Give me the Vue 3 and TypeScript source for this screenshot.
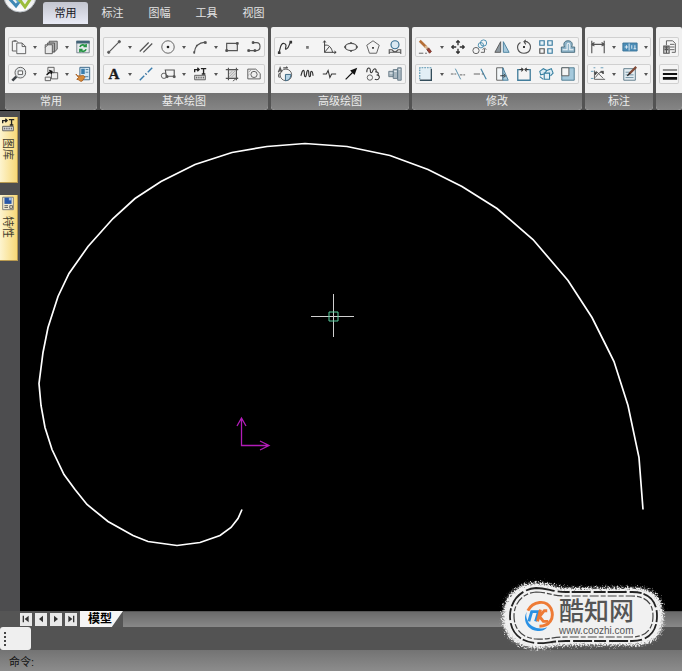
<script setup lang="ts">
import { ref } from 'vue'

interface Tool {
  icon: string
  label: string
  menu?: boolean
}
interface Panel {
  title: string
  compact?: boolean
  rows: Tool[][]
}

const tabs = ['常用', '标注', '图幅', '工具', '视图']
const activeTab = ref('常用')
const command = ref('')

const t = (icon: string, label: string, menu = false): Tool => ({ icon, label, menu })

const panels: Panel[] = [
  {
    title: '常用',
    rows: [
      [t('copy', '复制', true), t('paste', '粘贴', true), t('refresh', '刷新')],
      [t('zoom', '缩放', true), t('block', '块', true), t('brush', '特性匹配')],
    ],
  },
  {
    title: '基本绘图',
    rows: [
      [t('line', '直线', true), t('parallel', '平行线'), t('circle', '圆', true), t('arc', '圆弧', true), t('rect', '矩形'), t('polyline', '多段线')],
      [t('text', '文字', true), t('axis', '中心线'), t('callout', '块引用', true), t('library', '图库', true), t('hatch', '剖面线'), t('fill', '填充')],
    ],
  },
  {
    title: '高级绘图',
    rows: [
      [t('spline', '样条'), t('point', '点'), t('formula', '公式曲线'), t('ellipse', '椭圆'), t('polygon', '正多边形'), t('enlarge', '局部放大')],
      [t('detail', '圆弧拟合'), t('wave', '波浪线'), t('break', '双折线'), t('arrow', '箭头'), t('gear', '齿轮'), t('shaft', '孔轴')],
    ],
  },
  {
    title: '修改',
    rows: [
      [t('erase', '删除', true), t('move', '平移'), t('duplicate', '平移复制'), t('mirror', '镜像'), t('rotate', '旋转'), t('array', '阵列'), t('offset', '等距线')],
      [t('corner', '过渡', true), t('trim', '裁剪'), t('extend', '延伸'), t('stretch', '拉伸'), t('split', '打断'), t('explode', '分解'), t('scale', '缩放图形')],
    ],
  },
  {
    title: '标注',
    compact: true,
    rows: [
      [t('dimension', '尺寸标注', true), t('tolerance', '公差', true)],
      [t('coordinate', '坐标标注', true), t('note', '标注编辑', true)],
    ],
  },
  {
    title: '',
    rows: [[t('layer', '图层')], [t('weight', '线宽')]],
  },
]

const icons: Record<string, string> = {
  copy: '<path d="M6 2.500H1.500v11H6M3 2l3 0 2 2" /><path fill="#f4f5f6" d="M6.500 4.500h6l4 4v8h-10zM12.500 4.500v4h4"/>',
  paste: '<path fill="#bbb" d="M7 2.500h9v9l-3 3H7z"/><path fill="#aaa" d="M5 4.500h8v10H5z"/><path fill="#e8e8e8" d="M2.500 6.500h8v10h-8zM2.500 9.500l3-3"/>',
  refresh: '<path fill="#e6eaed" stroke="#73808b" d="M2 2.500h14v13H2z"/><path fill="#426477" stroke="none" d="M1.500 2h15v3h-15z"/><path stroke="#279445" stroke-width="1.800" d="M5.500 9c1-3 5-3 6-1M12.500 5.500v3H9.500M12.500 11.500c-1 3-5 3-6 1M5.500 15v-3h3"/>',
  zoom: '<circle cx="10.500" cy="7.500" r="6" fill="#e5e8ea"/><path fill="#fff" d="M8 5.500h5v4H8z"/><path stroke="#3d4348" stroke-width="3" d="M6 12l-4.500 4.500"/>',
  block: '<path fill="#eee" d="M5.500 1.500h7v6h-7zM9.500 7.500h7v7h-7zM2.500 12.500h6v4h-6z"/><path stroke="#111" stroke-width="1.500" d="M4 10l5-4M7 5l3 1-1 3"/>',
  brush: '<path fill="#d2e6f3" stroke="#315f82" d="M5.500 1.500h11v14h-11z"/><path fill="#397dac" stroke="none" d="M7 3h4v6H7z"/><path stroke="#477897" d="M12 4h3M12 7h3M9 12h6"/><path fill="#d78a37" stroke="#a45b1e" d="M1 9c2 3 4 2 6 2 2-1 4 0 4 2l-3 4c-3 1-3-2-6-2l2-2z"/>',
  line: '<path stroke-width="1.300" d="M3 15L15 3"/><circle cx="3" cy="15" r="1.300" fill="#555"/><circle cx="15" cy="3" r="1.300" fill="#555"/>',
  parallel: '<path stroke-width="1.400" d="M2 14L12 4M6 15L16 5"/>',
  circle: '<circle cx="9" cy="9" r="7"/><circle cx="9" cy="9" r="1.500" fill="#222" stroke="none"/>',
  arc: '<path stroke-width="1.300" d="M2.500 16C3 9 7 4 15 3.500"/><path fill="#555" d="M2 14h1v2H2zM14 3h2v2h-2zM5 7h1v1H5z"/>',
  rect: '<path stroke-width="1.300" fill="#ececec" d="M3 5h12v8H3z"/><path fill="#444" d="M2 12h2v2H2zM14 4h2v2h-2z"/>',
  polyline: '<path stroke-width="1.300" d="M8 4h4c5 0 5 9 0 9H3"/><path fill="#444" d="M7 3h2v2H7zM2 12h2v2H2zM9 12h2v2H9z"/>',
  text: '<text x="9" y="15" text-anchor="middle" font-family="Liberation Serif, serif" font-size="17" font-weight="700" fill="#1b1b1b" stroke="#1b1b1b" stroke-width=".4">A</text>',
  axis: '<path stroke="#397cad" stroke-width="1.600" d="M2 16l5-5M11 7l5-5"/><path stroke="#16578b" stroke-width="2" d="M8.500 9.500l1-1"/>',
  callout: '<path stroke-width="1.300" d="M6 4.500h10v7H7z"/><circle cx="4.500" cy="11" r="3"/><path fill="#555" d="M7 11h2v2H7zM15 11h2v2h-2z"/>',
  library: '<path stroke="#222" stroke-width="1.500" d="M3 7V4h4M6 2l2 2-2 2M10 3h6M13 3v6M11 9h4"/><path fill="#dedede" d="M3 10.500h12v5H3z"/><path d="M5 12v2M7 12v2M9 12v2M11 12v2M13 12v2"/>',
  hatch: '<path fill="#ddd" stroke="none" d="M5 4h9v10H5z"/><path stroke-width="1.300" d="M5 2v14M14 2v14M2 4h14M2 14h14"/><path stroke="#aaa" d="M6 9l4-4M6 12l7-7M8 13l5-5"/><path d="M10 17l5-4"/>',
  fill: '<path fill="#efefef" d="M2 3.500h9l5 5v6H2z"/><circle cx="9" cy="9.500" r="3.500"/><path stroke="#999" d="M3 7l3-3M2 11l2-2"/>',
  spline: '<path stroke="#333" stroke-width="1.300" d="M2 15C4 13 3 4 8 5c5 1-1 8 3 6 3-1 2-6 5-8"/><path fill="#333" stroke="none" d="M1 14h3v3H1zM14 2h3v3h-3z"/>',
  point: '<path fill="#777" stroke="none" d="M8 8h3v3H8z"/>',
  formula: '<path stroke="#333" d="M4 2v13h13M2.500 4L4 2l1.500 2M15 13.500l2 1.500-2 1.500M4 7c5-1 8 3 9 8M4 15l5-6"/>',
  ellipse: '<ellipse cx="9" cy="9" rx="6.500" ry="4" stroke-width="1.300"/><path fill="#333" d="M2 8h1v2H2zM15 8h1v2h-1zM8.500 4h1v1h-1zM8.500 13h1v1h-1z"/>',
  polygon: '<path d="M9 2l7 5-3 9H5L2 7z"/><path fill="#333" stroke="none" d="M8 9h2v2H8z"/>',
  enlarge: '<circle cx="9" cy="6.500" r="4.500" stroke="#376f91" fill="#d9e9f2" stroke-width="1.300"/><path stroke-width="1.200" d="M2.500 17v-5h3c2 3 5 3 7 0h3v5M2.500 15h13"/>',
  detail: '<circle cx="10" cy="10" r="6.500"/><path fill="#b5d3e5" stroke="#315e7b" d="M9.500 9.500h6c0 4-2 7-6 7z"/><path stroke-width="1.400" d="M1.500 7l2-5 2 5M2 5.500h3M7 2h5l-2-1M3 13c-2-1-1-4 0-5"/>',
  wave: '<path stroke="#333" stroke-width="1.300" d="M2 11c1-1 1-6 3-6s0 7 2 7 1-7 3-7 0 7 2 7 0-6 2-6 1 3 2 5"/>',
  break: '<path stroke="#333" stroke-width="1.200" d="M2 9h4l2-4 2 8 2-4h5"/>',
  arrow: '<path stroke="#111" stroke-width="1.300" d="M3 15l8-8"/><path fill="#111" stroke="none" d="M16 2l-3 8-5-5z"/>',
  gear: '<path stroke="#333" stroke-width="1.200" d="M2 7c0-6 4-6 4-2s2 3 3 0 5-2 3 2M12 7c3-1 4 2 2 3 4 1 2 7-3 5"/><circle cx="5.500" cy="13" r="3"/>',
  shaft: '<path fill="#a9b7c0" stroke="#657985" d="M2 6h5V4h5V2h4v14h-4v-2H7v-2H2z"/><path stroke="#f0f5f8" d="M3 8h4M8 6h3M13 4h2"/><path stroke="#486576" d="M7 6v6M12 4v10"/>',
  erase: '<path stroke="#b56f37" stroke-width="3" d="M2 2l7 7"/><path stroke="#d9b58d" stroke-width="3" d="M8 8l3 3"/><path fill="#9d3e30" stroke="#6f3028" d="M10 12l2-2 3 4-2 2z"/><path d="M1 16h9" stroke-dasharray="5 2"/>',
  move: '<path stroke="#333" stroke-width="1.500" d="M9 2v5M9 11v5M2 9h5M11 9h5M7 4l2-2 2 2M7 14l2 2 2-2M4 7L2 9l2 2M14 7l2 2-2 2"/>',
  duplicate: '<circle cx="13" cy="4.500" r="3.500" stroke="#3d86aa"/><circle cx="10" cy="7" r="3" stroke="#3d86aa"/><circle cx="4.500" cy="13" r="3.500"/><path d="M10 15h4v-4M12 12l2-2 2 2"/>',
  mirror: '<path fill="#8d989f" d="M7.500 3v12H1z"/><path fill="#a6c9dc" stroke="#437c9b" d="M10.500 3v12H17z"/>',
  rotate: '<path stroke-width="1.300" d="M5 4C-1 8 2 16 9 16c8 0 10-10 3-13M9 3h4M11 1L9 3l2 3"/><path fill="#222" stroke="none" d="M8 8h2v2H8z"/>',
  array: '<path stroke="#397a9e" stroke-width="1.300" fill="#e7f2f7" d="M2 2h5v5H2zM11 2h5v5h-5zM11 11h5v5h-5z"/><path stroke-width="1.300" d="M2 11h5v5H2z"/>',
  offset: '<path fill="#8fb4c9" stroke="#416778" d="M1.500 15V9H5C3 4 6 2 9 2c4 0 6 3 4 7h3.500v6z"/><path stroke="#f2f6f8" stroke-width="1.200" d="M3 12h5V7c0-3 3-3 3 0v5h4"/>',
  corner: '<path fill="#e2eff5" stroke="none" d="M3 3h11v12H3z"/><path stroke="#4f91b0" stroke-width="1.300" stroke-dasharray="2 1" d="M2 15V2h13"/><path stroke="#334d5b" stroke-width="1.500" d="M2 16h13V3"/>',
  trim: '<path stroke="#4684a4" d="M6 3l6 12"/><path stroke-dasharray="3 1" d="M1 9h6M11 10h6"/>',
  extend: '<path stroke="#4684a4" stroke-width="1.300" d="M10 3l6 12"/><path d="M2 9h7M11 9h2"/>',
  stretch: '<path fill="#f3f7f9" d="M3 2h7v14H3z"/><path fill="#a9ccdd" stroke="#407998" d="M10 2l6 14h-6z"/><path stroke="#222" d="M7 11h5M11 9l2 2-2 2"/>',
  split: '<path stroke="#427d9b" stroke-width="1.500" d="M6 4H2v12h14V4h-4"/><path stroke="#333" stroke-width="1.200" d="M4 4h3M11 4h3M6 2l2 2-2 2M12 2l-2 2 2 2"/>',
  explode: '<path stroke="#347e9f" stroke-width="1.200" fill="#dcecf4" d="M2 6l4-3 4 2-3 4-4 1zM2 12l4 3M10 5l5-2 2 5-3 3"/><path stroke="#347e9f" stroke-width="1.200" fill="#e4f0f6" d="M7 8h6v7H7z"/>',
  scale: '<path fill="#a5c9dc" stroke="#47758d" d="M2 16V2h14v14z"/><path fill="#f4f5f5" d="M2 2h8v9H2z"/>',
  dimension: '<path stroke-width="1.300" d="M2 2v14M16 2v14M3 6h12M5 4L2 6l3 2M13 4l3 2-3 2"/>',
  tolerance: '<path fill="#4c8db7" stroke="#397397" d="M1 4.500h16v9H1z"/><path stroke="#e8f2f8" d="M8 5v8M5 7v4M3 9h4M11 7v4M14.500 7v4M13 11h3"/>',
  coordinate: '<path d="M5 5v10h12M6 13l4-5 5-2M7 6l8 8" /><path stroke="#5995b3" d="M4 2h2M12 2h3M1 6h3M1 14h3"/><path fill="#333" d="M5 7l3 0-2 3zM12 6h3v3z"/>',
  note: '<path fill="#e3edf2" stroke="#567383" d="M2 3h13v13H2z"/><path stroke="#67889c" d="M4 7h6M4 10h9M4 13h9"/><path stroke="#804936" stroke-width="2.500" d="M16 1L8 9"/><path stroke="#222" stroke-width="1.500" d="M9 8l-3 3"/>',
  layer: '<path d="M5 7V2h7l3 3v10h-4M9 6h5M9 9h5M9 12h5"/><path fill="#ddd" stroke-width="1.300" d="M2 8h6v8H2zM3 10h4M3 12h4M5 8v8"/>',
  weight: '<path stroke="#111" d="M1 4.500h16"/><path stroke="#111" stroke-width="2" d="M1 9h16"/><path stroke="#111" stroke-width="3" d="M1 14h16"/>',
  property: '<path fill="#f0ead0" stroke="#777" d="M3 2.500h12v14H3z"/><path fill="#2858a8" stroke="none" d="M5 3h8v7H5z"/><path fill="#9db9df" stroke="none" d="M10 3h3v3h-3z"/><path d="M5 12h4M5 14h4M11 12h3v3h-3z"/>',
  first: '<path fill="#333" stroke="none" d="M4 4h2v10H4zM13 4v10L7 9z"/>',
  prev: '<path fill="#333" stroke="none" d="M12 4v10L6 9z"/>',
  next: '<path fill="#333" stroke="none" d="M6 4v10l6-5z"/>',
  last: '<path fill="#333" stroke="none" d="M12 4h2v10h-2zM5 4v10l6-5z"/>',
}

const dockTabs = [
  { icon: 'library', label: '图库' },
  { icon: 'property', label: '特性' },
]
const pagers = [
  { icon: 'first', label: '首页' },
  { icon: 'prev', label: '上一页' },
  { icon: 'next', label: '下一页' },
  { icon: 'last', label: '末页' },
]

const curve: [number, number][] = [
  [242, 509], [238, 518], [231, 527], [220, 535], [200, 542], [177, 545], [148, 541], [133, 535], [108, 521],
  [87, 504], [75, 489], [64, 474], [52, 449], [45, 427], [41, 405], [39, 383], [43, 352], [48, 327], [58, 296],
  [69, 273], [88, 246], [113, 218], [135, 198], [161, 181], [195, 164], [232, 152], [267, 146], [305, 143],
  [347, 146], [390, 155], [428, 169], [462, 186], [497, 208], [533, 239], [568, 280], [592, 317], [607, 347],
  [614, 361], [628, 405], [639, 457], [643, 509],
]
const curvePoints = curve.map(([x, y]) => `${x - 20},${y - 110.5}`).join(' ')
</script>

<template>
  <div class="app">
    <header class="ribbon">
      <div class="tabbar">
        <button class="logo" aria-label="主菜单">
          <svg viewBox="0 0 34 34">
            <defs>
              <linearGradient id="orb" x1="0" y1="0" x2="0" y2="1">
                <stop offset="0" stop-color="#c9cdd2" />
                <stop offset="1" stop-color="#ffffff" />
              </linearGradient>
            </defs>
            <circle cx="17" cy="17" r="16" fill="url(#orb)" stroke="#b9bfc5" />
            <path d="M5 18l8 9 6-8" fill="none" stroke="#3d87b4" stroke-width="3" />
            <path d="M11 17l5 6" fill="none" stroke="#61a8c7" stroke-width="3" />
            <path d="M16 20l6 8 8-12" fill="none" stroke="#9bbd3c" stroke-width="3" />
          </svg>
        </button>
        <nav class="tabs">
          <button
            v-for="tab in tabs"
            :key="tab"
            class="tab"
            :class="{ active: tab === activeTab }"
            @click="activeTab = tab"
          >{{ tab }}</button>
        </nav>
      </div>
      <div class="panels">
        <section v-for="(panel, p) in panels" :key="p" class="panel" :class="{ compact: panel.compact }">
          <div class="rows">
            <div v-for="(row, r) in panel.rows" :key="r" class="row">
              <template v-for="tool in row" :key="tool.icon">
                <button class="tool" :aria-label="tool.label">
                  <svg class="icon" viewBox="0 0 18 18" v-html="icons[tool.icon]"></svg>
                </button>
                <button v-if="tool.menu" class="drop" :aria-label="tool.label + '选项'"><i></i></button>
              </template>
            </div>
          </div>
          <h2 class="title">{{ panel.title }}</h2>
        </section>
      </div>
    </header>

    <main class="work">
      <aside class="dock">
        <button v-for="d in dockTabs" :key="d.icon" class="docktab">
          <svg class="icon dockicon" viewBox="0 0 18 18" v-html="icons[d.icon]"></svg>
          <span>{{ d.label }}</span>
        </button>
      </aside>
      <svg class="canvas" viewBox="0 0 662 500">
        <polyline :points="curvePoints" fill="none" stroke="#fff" stroke-width="1.700" />
        <path d="M291 205.500h43M313.500 183v43" stroke="#d0d0d0" />
        <path d="M309 201h9v9h-9z" fill="none" stroke="#5ad0a0" />
        <path d="M221.500 307v27.500H249M217 315l4.500-8 4.500 8M240 330l9 4.500-9 4.500" fill="none" stroke="#b21cb8" stroke-width="1.300" />
      </svg>
    </main>

    <div class="sheets">
      <button v-for="g in pagers" :key="g.icon" class="pager" :aria-label="g.label">
        <svg class="icon" viewBox="0 0 18 18" v-html="icons[g.icon]"></svg>
      </button>
      <button class="sheet">模型</button>
      <div class="scroll"></div>
    </div>
    <div class="strip"><div class="grip"><i></i><i></i><i></i><i></i></div></div>
    <footer class="command">
      <label for="cmd">命令:</label>
      <input id="cmd" v-model="command" type="text" autocomplete="off" />
    </footer>

    <div class="brand">
      <svg class="cloud" viewBox="0 0 180 86">
        <defs>
          <filter id="soft" x="-10%" y="-20%" width="120%" height="140%">
            <feGaussianBlur stdDeviation="2" />
          </filter>
          <filter id="grain" x="-10%" y="-20%" width="120%" height="140%">
            <feGaussianBlur stdDeviation="1" result="b" />
            <feTurbulence type="fractalNoise" baseFrequency="0.6" numOctaves="2" seed="4" result="n" />
            <feDisplacementMap in="b" in2="n" scale="11" xChannelSelector="R" yChannelSelector="G" />
          </filter>
        </defs>
        <g fill="#f1f1f1">
          <path filter="url(#grain)" d="M40 10C58 9 56 15 76 15h64c20 0 29 10 29 28s-8 29-28 29H74c-18 0-20 4-36 3C18 72 9 61 9 43s12-32 31-33z" />
          <path filter="url(#soft)" d="M40 12C56 11 56 17 76 17h64c18 0 27 9 27 26s-8 27-26 27H74c-18 0-20 4-36 3C20 70 11 60 11 43s12-30 29-31z" />
        </g>
        <g fill="none" stroke="#222">
          <path stroke-width="1.800" stroke-dasharray="19 3 12 2" d="M42 15C54 15 58 19 72 19h66c17 0 25 9 25 24s-8 25-25 25H72C57 68 52 71 41 70 24 68 16 58 16 43s11-27 26-28z" />
          <path stroke="#444" stroke-width="1.200" stroke-dasharray="9 2 5 2" d="M42 19C53 19 58 23 72 23h65c15 0 22 7 22 20s-7 21-22 21H72C58 64 52 67 42 66 27 65 20 55 20 43s8-23 22-24z" />
        </g>
      </svg>
      <svg class="mark" viewBox="0 0 32 34" fill="none">
        <path d="M5 11C10 1 24-1 29 9c4 10-2 18-12 18" stroke="#ee7b36" stroke-width="3" />
        <path d="M4 12C-1 20 4 31 15 32c6 0 8-2 10-4-7 3-17 1-20-6-2-4-2-7-1-10z" fill="#2a91e4" />
        <path d="M6 22l3-10h7l-3 10" stroke="#2a91e4" stroke-width="3" />
        <path d="M25 11h-3l-5 6 4 5h5M18 10l-3 12" stroke="#ee7b36" stroke-width="3" />
      </svg>
      <div class="names">
        <strong>酷知网</strong>
        <span>www.coozhi.com</span>
      </div>
    </div>
  </div>
</template>

<style>
body {
  margin: 0;
  background: #555;
}
</style>

<style scoped>
.app {
  position: relative;
  display: flex;
  flex-direction: column;
  min-height: 100vh;
  overflow: hidden;
  background: #555;
  font-family: "Liberation Sans", "Noto Sans CJK SC", sans-serif;
  font-size: 11px;
}
button {
  margin: 0;
  padding: 0;
  border: 0;
  background: none;
  font: inherit;
  color: inherit;
}
.icon {
  display: block;
  width: 18px;
  height: 18px;
  fill: none;
  stroke: #555;
  overflow: visible;
}
.ribbon {
  background: #535353;
  border-bottom: 1px solid #000;
}
.tabbar {
  display: flex;
  height: 27px;
}
.logo {
  width: 34px;
  height: 34px;
  margin: -21px 6px 0 3px;
}
.logo svg {
  display: block;
}
.tabs {
  display: flex;
  gap: 2px;
  padding-top: 2px;
}
.tab {
  width: 45px;
  height: 22px;
  border-radius: 3px 3px 0 0;
  color: #e4e4e4;
  line-height: 22px;
}
.tab.active {
  background: linear-gradient(#c3c5cf, #e8eaf5);
  color: #15151c;
}
.panels {
  display: flex;
  gap: 3px;
  padding-left: 5px;
}
.panel {
  display: flex;
  flex: none;
  flex-direction: column;
  border-radius: 2px 2px 4px 4px;
  overflow: hidden;
  background: #f0f0f0;
}
.panel:last-child {
  flex: 1;
}
.rows {
  display: flex;
  flex-direction: column;
  gap: 7px;
  padding: 10px 3px 9px;
}
.compact .rows {
  padding: 10px 2px 9px;
}
.row {
  display: flex;
  align-items: center;
  height: 20px;
  border-radius: 2px;
  background: #f4f4f4;
  box-shadow: inset 0 0 0 1px #d0d0d0;
}
.tool {
  display: flex;
  flex: none;
  justify-content: center;
  width: 22px;
}
.tool .icon {
  width: 16px;
  height: 16px;
}
.drop {
  display: flex;
  flex: none;
  justify-content: center;
  width: 10px;
}
.drop i {
  border: 2px solid transparent;
  border-top: 3px solid #555;
  border-bottom: 0;
}
.title {
  margin: 0;
  height: 17px;
  background: linear-gradient(#727272, #858585);
  color: #ededed;
  font-size: 11px;
  font-weight: 400;
  line-height: 16px;
  text-align: center;
}
.work {
  display: flex;
  flex: 1;
  background: #000;
}
.dock {
  display: flex;
  flex: none;
  flex-direction: column;
  gap: 12px;
  width: 20px;
  padding-top: 6px;
  box-sizing: border-box;
  background: #4d4d4f;
}
.docktab {
  display: flex;
  flex-direction: column;
  align-items: center;
  gap: 5px;
  width: 18px;
  height: 66px;
  padding-right: 2px;
  border-right: 1px solid #b99a50;
  border-bottom: 1px solid #b99a50;
  box-sizing: border-box;
  background: linear-gradient(90deg, #fdf4cf, #f7d877);
  color: #443f30;
}
.docktab span {
  writing-mode: vertical-rl;
  text-orientation: sideways;
  line-height: 14px;
}
.dockicon {
  width: 16px;
  height: 16px;
}
.canvas {
  display: block;
  flex: 1;
  min-width: 0;
  align-self: stretch;
}
.sheets {
  display: flex;
  align-items: center;
  height: 16px;
  padding-left: 20px;
}
.pager {
  display: flex;
  align-items: center;
  justify-content: center;
  width: 12px;
  height: 13px;
  margin-right: 3px;
  background: #e9e9e9;
}
.pager .icon {
  width: 12px;
  height: 12px;
}
.sheet {
  width: 43px;
  height: 16px;
  padding-right: 3px;
  background: #f5f5f5;
  clip-path: polygon(0 0, 100% 0, 74% 100%, 0 100%);
  color: #000;
  font-size: 12px;
  font-weight: 700;
  line-height: 16px;
}
.scroll {
  flex: 1;
  height: 15px;
  background: linear-gradient(#6a6a6a, #888);
}
.strip {
  height: 23px;
  background: #535353;
}
.grip {
  display: flex;
  flex-direction: column;
  justify-content: center;
  gap: 2px;
  width: 31px;
  height: 23px;
  padding-left: 4px;
  box-sizing: border-box;
  border-radius: 3px;
  background: #efefef;
}
.grip i {
  width: 2px;
  height: 2px;
  background: #444;
}
.command {
  display: flex;
  align-items: center;
  height: 21px;
  padding-left: 9px;
  background: linear-gradient(#737373, #8c8c8c);
  color: #111;
}
.command input {
  flex: 1;
  min-width: 0;
  border: 0;
  outline: 0;
  background: transparent;
  font: inherit;
}
.brand {
  position: absolute;
  right: 8px;
  bottom: 12px;
  display: flex;
  align-items: center;
  gap: 5px;
  width: 180px;
  height: 86px;
  padding-left: 29px;
  box-sizing: border-box;
}
.cloud {
  position: absolute;
  inset: 0;
}
.mark {
  position: relative;
  width: 31px;
  height: 33px;
}
.names {
  position: relative;
  display: flex;
  flex-direction: column;
  color: #555;
  font-size: 10px;
  line-height: 11px;
}
.names strong {
  font-size: 25px;
  font-weight: 500;
  line-height: 28px;
}
</style>
